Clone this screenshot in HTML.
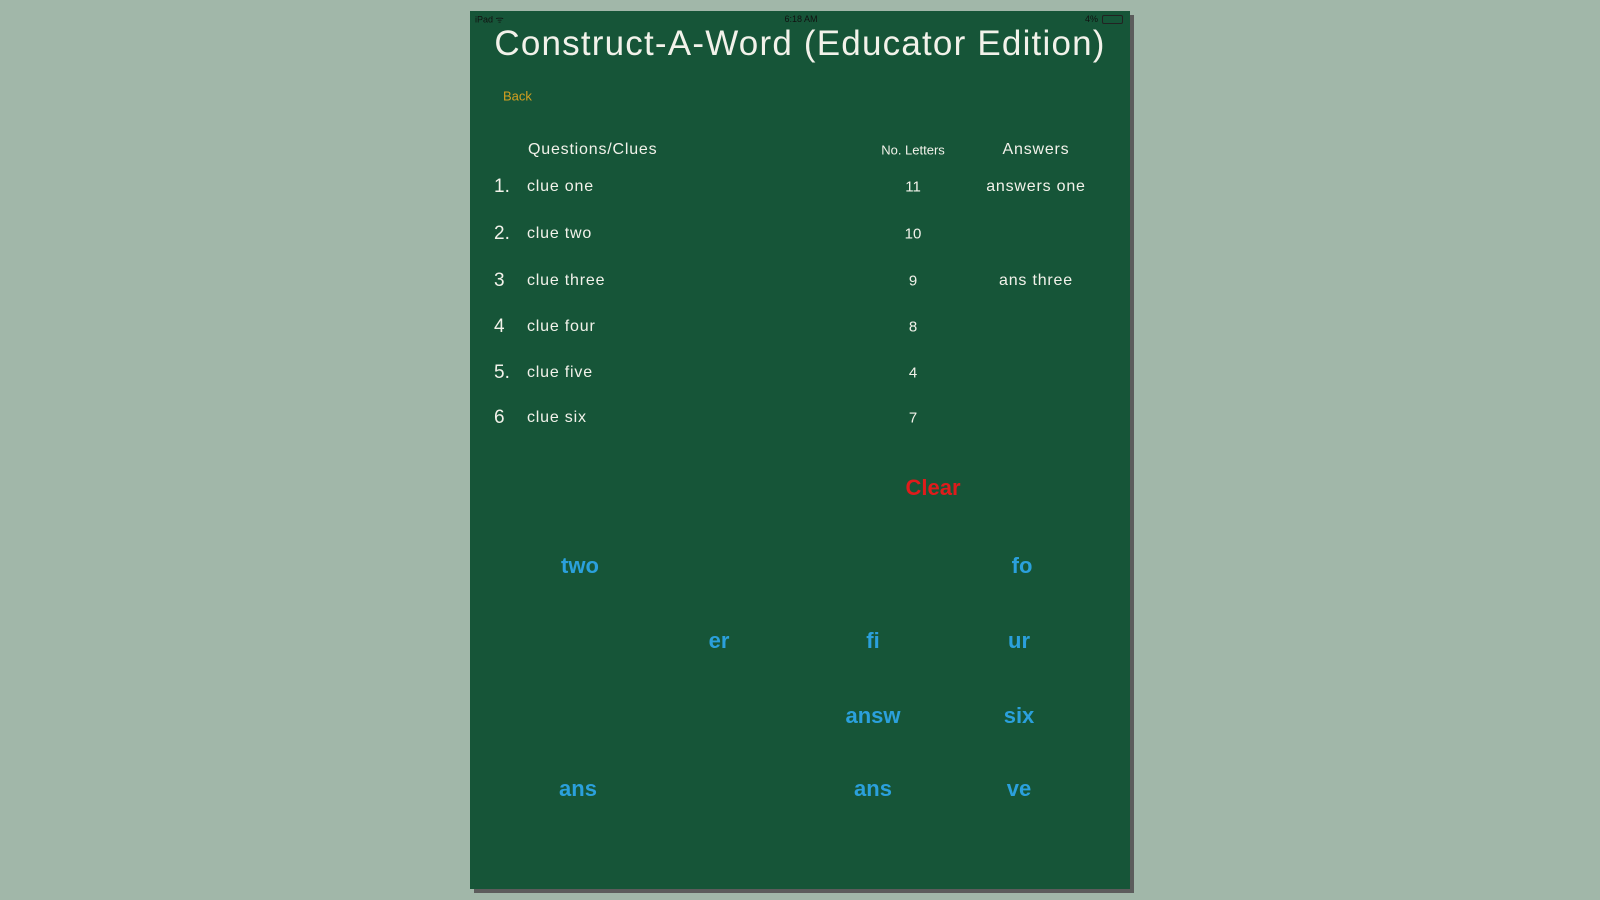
<!DOCTYPE html>
<html><head><meta charset="utf-8"><style>
body{margin:0;width:1600px;height:900px;background:#a1b7a9;position:relative;overflow:hidden;font-family:"Liberation Sans",sans-serif}
.shadow{position:absolute;left:474px;top:15px;width:660px;height:878px;background:#5c5c5c}
.panel{position:absolute;left:470px;top:11px;width:660px;height:878px;background:#165538}
.t{position:absolute;white-space:nowrap;transform:translate(-50%,-50%);color:#f2f2ea}
.l{position:absolute;white-space:nowrap;transform:translateY(-50%);color:#f2f2ea}
.b{position:absolute;white-space:nowrap;transform:translate(-50%,-50%);color:#2ba0dc;font-weight:bold;font-size:22px}
.c{letter-spacing:0.8px}
</style></head><body>
<div class="shadow"></div><div class="panel"></div>
<div class="l" style="left:475px;top:19px;font-size:9px;color:#111">iPad ᯤ</div>
<div class="t" style="left:801px;top:19px;font-size:9px;color:#111">6:18 AM</div>
<div class="l" style="left:1085px;top:19px;font-size:9px;color:#111">4%</div>
<div style="position:absolute;left:1102px;top:15px;width:19px;height:7px;border:1px solid #222;border-radius:2px"></div>
<div class="t" style="left:800px;top:44px;font-size:35px;letter-spacing:1.2px">Construct-A-Word (Educator Edition)</div>
<div class="l" style="left:503px;top:96px;font-size:13px;color:#d4a020">Back</div>
<div class="l c" style="left:528px;top:150px;font-size:16px">Questions/Clues</div>
<div class="t" style="left:913px;top:150px;font-size:13px">No. Letters</div>
<div class="t c" style="left:1036px;top:150px;font-size:16px">Answers</div>

<div class="l" style="left:494px;top:187px;font-size:19px">1.</div><div class="l c" style="left:527px;top:187px;font-size:16px">clue one</div><div class="t" style="left:913px;top:187px;font-size:15px">11</div><div class="t c" style="left:1036px;top:187px;font-size:16px">answers one</div>
<div class="l" style="left:494px;top:234px;font-size:19px">2.</div><div class="l c" style="left:527px;top:234px;font-size:16px">clue two</div><div class="t" style="left:913px;top:234px;font-size:15px">10</div>
<div class="l" style="left:494px;top:281px;font-size:19px">3</div><div class="l c" style="left:527px;top:281px;font-size:16px">clue three</div><div class="t" style="left:913px;top:281px;font-size:15px">9</div><div class="t c" style="left:1036px;top:281px;font-size:16px">ans three</div>
<div class="l" style="left:494px;top:327px;font-size:19px">4</div><div class="l c" style="left:527px;top:327px;font-size:16px">clue four</div><div class="t" style="left:913px;top:327px;font-size:15px">8</div>
<div class="l" style="left:494px;top:373px;font-size:19px">5.</div><div class="l c" style="left:527px;top:373px;font-size:16px">clue five</div><div class="t" style="left:913px;top:373px;font-size:15px">4</div>
<div class="l" style="left:494px;top:418px;font-size:19px">6</div><div class="l c" style="left:527px;top:418px;font-size:16px">clue six</div><div class="t" style="left:913px;top:418px;font-size:15px">7</div>

<div class="t" style="left:933px;top:488px;font-size:22px;font-weight:bold;color:#e01b1b">Clear</div>
<div class="b" style="left:580px;top:566px">two</div>
<div class="b" style="left:1022px;top:566px">fo</div>
<div class="b" style="left:719px;top:641px">er</div>
<div class="b" style="left:873px;top:641px">fi</div>
<div class="b" style="left:1019px;top:641px">ur</div>
<div class="b" style="left:873px;top:716px">answ</div>
<div class="b" style="left:1019px;top:716px">six</div>
<div class="b" style="left:578px;top:789px">ans</div>
<div class="b" style="left:873px;top:789px">ans</div>
<div class="b" style="left:1019px;top:789px">ve</div>
</body></html>
